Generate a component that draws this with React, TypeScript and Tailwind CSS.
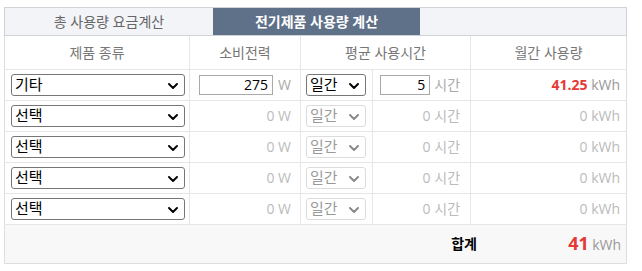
import React from "react";

const FONT = { fontFamily: '"Open Sans", "Noto Sans CJK KR", sans-serif' };

type Row = { name: string; watt: string; hours: string; kwh: string; active: boolean };

const rows: Row[] = [
  { name: "기타", watt: "275", hours: "5", kwh: "41.25", active: true },
  { name: "선택", watt: "0", hours: "0", kwh: "0", active: false },
  { name: "선택", watt: "0", hours: "0", kwh: "0", active: false },
  { name: "선택", watt: "0", hours: "0", kwh: "0", active: false },
  { name: "선택", watt: "0", hours: "0", kwh: "0", active: false },
];

function Chevron({ className }: { className: string }) {
  return (
    <svg viewBox="0 0 10 6" className={className} fill="none">
      <path d="M1 1l4 4 4-4" stroke="currentColor" strokeWidth="1.9" strokeLinecap="round" strokeLinejoin="round" />
    </svg>
  );
}

function FakeSelect({ label, active, width }: { label: string; active: boolean; width: string }) {
  return (
    <div
      className={`relative flex h-[22px] items-center rounded-[3px] border pl-[3px] text-[15px] ${width} ${
        active ? "border-[#767676] text-black" : "border-[#dcdcdc] text-[#999]"
      }`}
    >
      <span className="leading-none">{label}</span>
      <Chevron
        className={`absolute right-[6px] top-[8px] h-[6px] w-[10px] ${active ? "text-black" : "text-[#888]"}`}
      />
    </div>
  );
}

export default function App() {
  return (
    <div className="bg-white pl-[4px] pt-[7px]" style={FONT}>
      <div className="w-[623px]">
        <div className="flex h-[29px] border-x border-t border-b border-[#cfd3d8] bg-[#f2f4f7] text-[14px]">
          <div className="flex w-[208px] items-center justify-center text-[#666]">총 사용량 요금계산</div>
          <div className="flex w-[207px] items-center justify-center bg-[#5f7089] font-bold text-white">
            전기제품 사용량 계산
          </div>
          <div className="flex-1" />
        </div>
        <table className="w-full table-fixed border-collapse border-x border-b border-[#dedede] text-[13px] whitespace-nowrap">
          <colgroup>
            <col className="w-[185px]" />
            <col className="w-[111px]" />
            <col className="w-[72px]" />
            <col className="w-[98px]" />
            <col />
          </colgroup>
          <thead>
            <tr className="h-[33px] text-[14px] text-[#777]">
              <th className="border-r border-b border-[#e6e6e6] font-normal">제품 종류</th>
              <th className="border-r border-b border-[#e6e6e6] font-normal">소비전력</th>
              <th colSpan={2} className="border-r border-b border-[#e6e6e6] font-normal">
                평균 사용시간
              </th>
              <th className="border-b border-[#e6e6e6] font-normal">월간 사용량</th>
            </tr>
          </thead>
          <tbody>
            {rows.map((r, i) => (
              <tr key={i} className="h-[31px]">
                <td className="border-r border-b border-[#e6e6e6] pl-[6px] pr-[5px]">
                  <FakeSelect label={r.name} active={true} width="w-[174px]" />
                </td>
                <td className="border-r border-b border-[#e6e6e6] pr-[9px] text-right">
                  {r.active ? (
                    <div className="flex items-center justify-end gap-[5px]">
                      <div className="flex h-[20px] w-[74px] items-center justify-end border border-[#a9a9a9] pr-[4px] text-[14px] text-black">
                        {r.watt}
                      </div>
                      <span className="text-[14px] text-[#aaa]">W</span>
                    </div>
                  ) : (
                    <span className="text-[14px] text-[#bbb]">0 W</span>
                  )}
                </td>
                <td className="border-r border-b border-[#e6e6e6] pl-[5px]">
                  <FakeSelect label="일간" active={r.active} width="w-[60px]" />
                </td>
                <td className="border-r border-b border-[#e6e6e6] pr-[10px] text-right">
                  {r.active ? (
                    <div className="flex items-center justify-end gap-[4px]">
                      <div className="flex h-[20px] w-[50px] items-center justify-end border border-[#a9a9a9] pr-[4px] text-[14px] text-black">
                        {r.hours}
                      </div>
                      <span className="text-[14px] text-[#aaa]">시간</span>
                    </div>
                  ) : (
                    <span className="text-[14px] text-[#bbb]">0 시간</span>
                  )}
                </td>
                <td className="border-b border-[#e6e6e6] pr-[6px] text-right text-[14px]">
                  {r.active ? (
                    <>
                      <span className="font-bold text-[#e53935]">{r.kwh}</span>{" "}
                      <span className="text-[#999]">kWh</span>
                    </>
                  ) : (
                    <span className="text-[#bbb]">0 kWh</span>
                  )}
                </td>
              </tr>
            ))}
            <tr className="h-[39px] bg-[#f8f8f8]">
              <td colSpan={5} className="pr-[5px]">
                <div className="flex items-center justify-end">
                  <span className="text-[14px] font-bold text-black">합계</span>
                  <span className="w-[144px] text-right">
                    <span className="text-[18px] font-bold text-[#e53935]">41</span>{" "}
                    <span className="text-[14px] text-[#999]">kWh</span>
                  </span>
                </div>
              </td>
            </tr>
          </tbody>
        </table>
      </div>
    </div>
  );
}
